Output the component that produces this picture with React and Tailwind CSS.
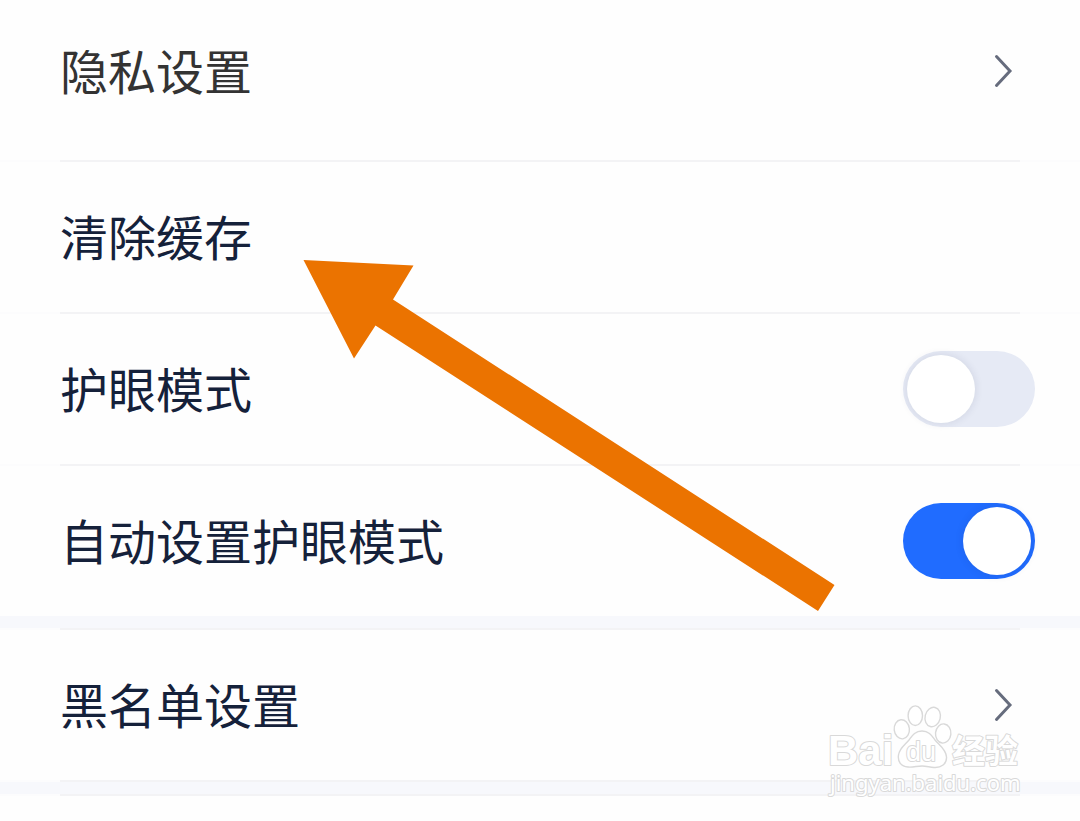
import React, { useState } from 'react';

const LABEL = 'pb-1 text-5xl';

function Divider() {
  return (
    <div className="h-0.5 bg-[#fcfcfd] px-[60px]">
      <div className="h-full bg-[#f3f3f5]"></div>
    </div>
  );
}

// Grey band between two groups of settings
function GroupGap() {
  return <div className="h-3 bg-[#f7f8fc]"></div>;
}

function Chevron() {
  return (
    <svg className="h-9 w-6" viewBox="0 0 24 36" fill="none" stroke="#666c7d" aria-hidden="true">
      <path d="M4.5 3.5 L18 18 L4.5 32.5" strokeWidth="3" strokeLinecap="round" strokeLinejoin="miter" />
    </svg>
  );
}

function LinkRow({ label, className = 'h-[150px] text-[#15213a]' }) {
  return (
    <a href="#" className={`flex items-center justify-between pr-16 pl-[60px] ${className}`}>
      <span className={LABEL}>{label}</span>
      <Chevron />
    </a>
  );
}

function ActionRow({ label }) {
  return (
    <button type="button" className="flex h-[150px] w-full items-center pr-16 pl-[60px] text-left">
      <span className={LABEL}>{label}</span>
    </button>
  );
}

function SwitchRow({ id, label, checked, onChange }) {
  return (
    <div className="flex h-[150px] items-center justify-between pr-[45px] pl-[60px]">
      <label htmlFor={id} className={LABEL}>{label}</label>
      <input
        id={id}
        type="checkbox"
        role="switch"
        checked={checked}
        onChange={(e) => onChange(e.target.checked)}
        className="flex h-[76px] w-[132px] cursor-pointer appearance-none items-center rounded-full bg-[#e6eaf5] px-1 before:size-[68px] before:rounded-full before:bg-white before:shadow-[0_0_8px_rgba(30,40,80,0.12)] before:content-[''] checked:justify-end checked:bg-[#206cff]"
      />
    </div>
  );
}

function Arrow() {
  return (
    <svg
      className="pointer-events-none absolute top-[260px] left-[303px] h-[352px] w-[532px]"
      viewBox="303 260 532 352"
      aria-hidden="true"
    >
      <path d="M303.5 260 L413.5 265.5 L393 299.5 L834.5 585 L818 611 L375.5 325.5 L354 358.5 Z" fill="#eb7300" />
    </svg>
  );
}

function Watermark() {
  return (
    <svg
      className="pointer-events-none absolute top-[700px] right-[50px] h-[100px] w-[210px]"
      viewBox="820 700 210 100"
      fill="#ffffff"
      stroke="#d9d9d9"
      strokeWidth="1.4"
      strokeLinejoin="round"
    >
      <ellipse cx="915.3" cy="715.7" rx="7.2" ry="9.8" />
      <ellipse cx="932.7" cy="717" rx="7.6" ry="9.8" transform="rotate(14 932.7 717)" />
      <ellipse cx="901.8" cy="729.3" rx="7.6" ry="9.6" transform="rotate(-6 901.8 729.3)" />
      <ellipse cx="943.2" cy="733.5" rx="7.7" ry="9.6" transform="rotate(6 943.2 733.5)" />
      <path d="M922 731 C929 731 932 736 935 740 C939 745 946 749 946.5 757 C947 764 941 768 934 767.5 C929 767 926 766 922 766 C917 766 913 767.5 908 767 C901 766.5 897.5 762 898.5 755 C899.5 748 905 745 909 740 C912 736 915 731 922 731 Z" />
      <g paintOrder="stroke" strokeWidth="2">
        <text x="828" y="765" fontSize="42" fontWeight="700" fontFamily="'Liberation Sans', Arial, sans-serif">Bai</text>
        <text x="906" y="761" fontSize="27" fontWeight="400" fontFamily="'Liberation Sans', Arial, sans-serif">du</text>
        <text x="952" y="763" fontSize="33" fontWeight="700" fontFamily="'Noto Sans CJK SC', sans-serif">经验</text>
        <text x="830" y="791" fontSize="22" fontFamily="'Noto Sans', sans-serif">jingyan.baidu.com</text>
      </g>
    </svg>
  );
}

export default function App() {
  const [eyeCare, setEyeCare] = useState(false);
  const [autoEyeCare, setAutoEyeCare] = useState(true);

  return (
    <main className="relative min-h-screen overflow-hidden bg-[#fefefe] font-['Noto_Sans_CJK_SC',sans-serif] text-[#15213a]">
      <LinkRow label="隐私设置" className="h-40 pb-[18px] text-[#333333]" />
      <Divider />
      <ActionRow label="清除缓存" />
      <Divider />
      <SwitchRow id="eye-care" label="护眼模式" checked={eyeCare} onChange={setEyeCare} />
      <Divider />
      <SwitchRow id="auto-eye-care" label="自动设置护眼模式" checked={autoEyeCare} onChange={setAutoEyeCare} />
      <GroupGap />
      <Divider />
      <LinkRow label="黑名单设置" />
      <Divider />
      <GroupGap />
      <Divider />
      <Arrow />
      <Watermark />
    </main>
  );
}
